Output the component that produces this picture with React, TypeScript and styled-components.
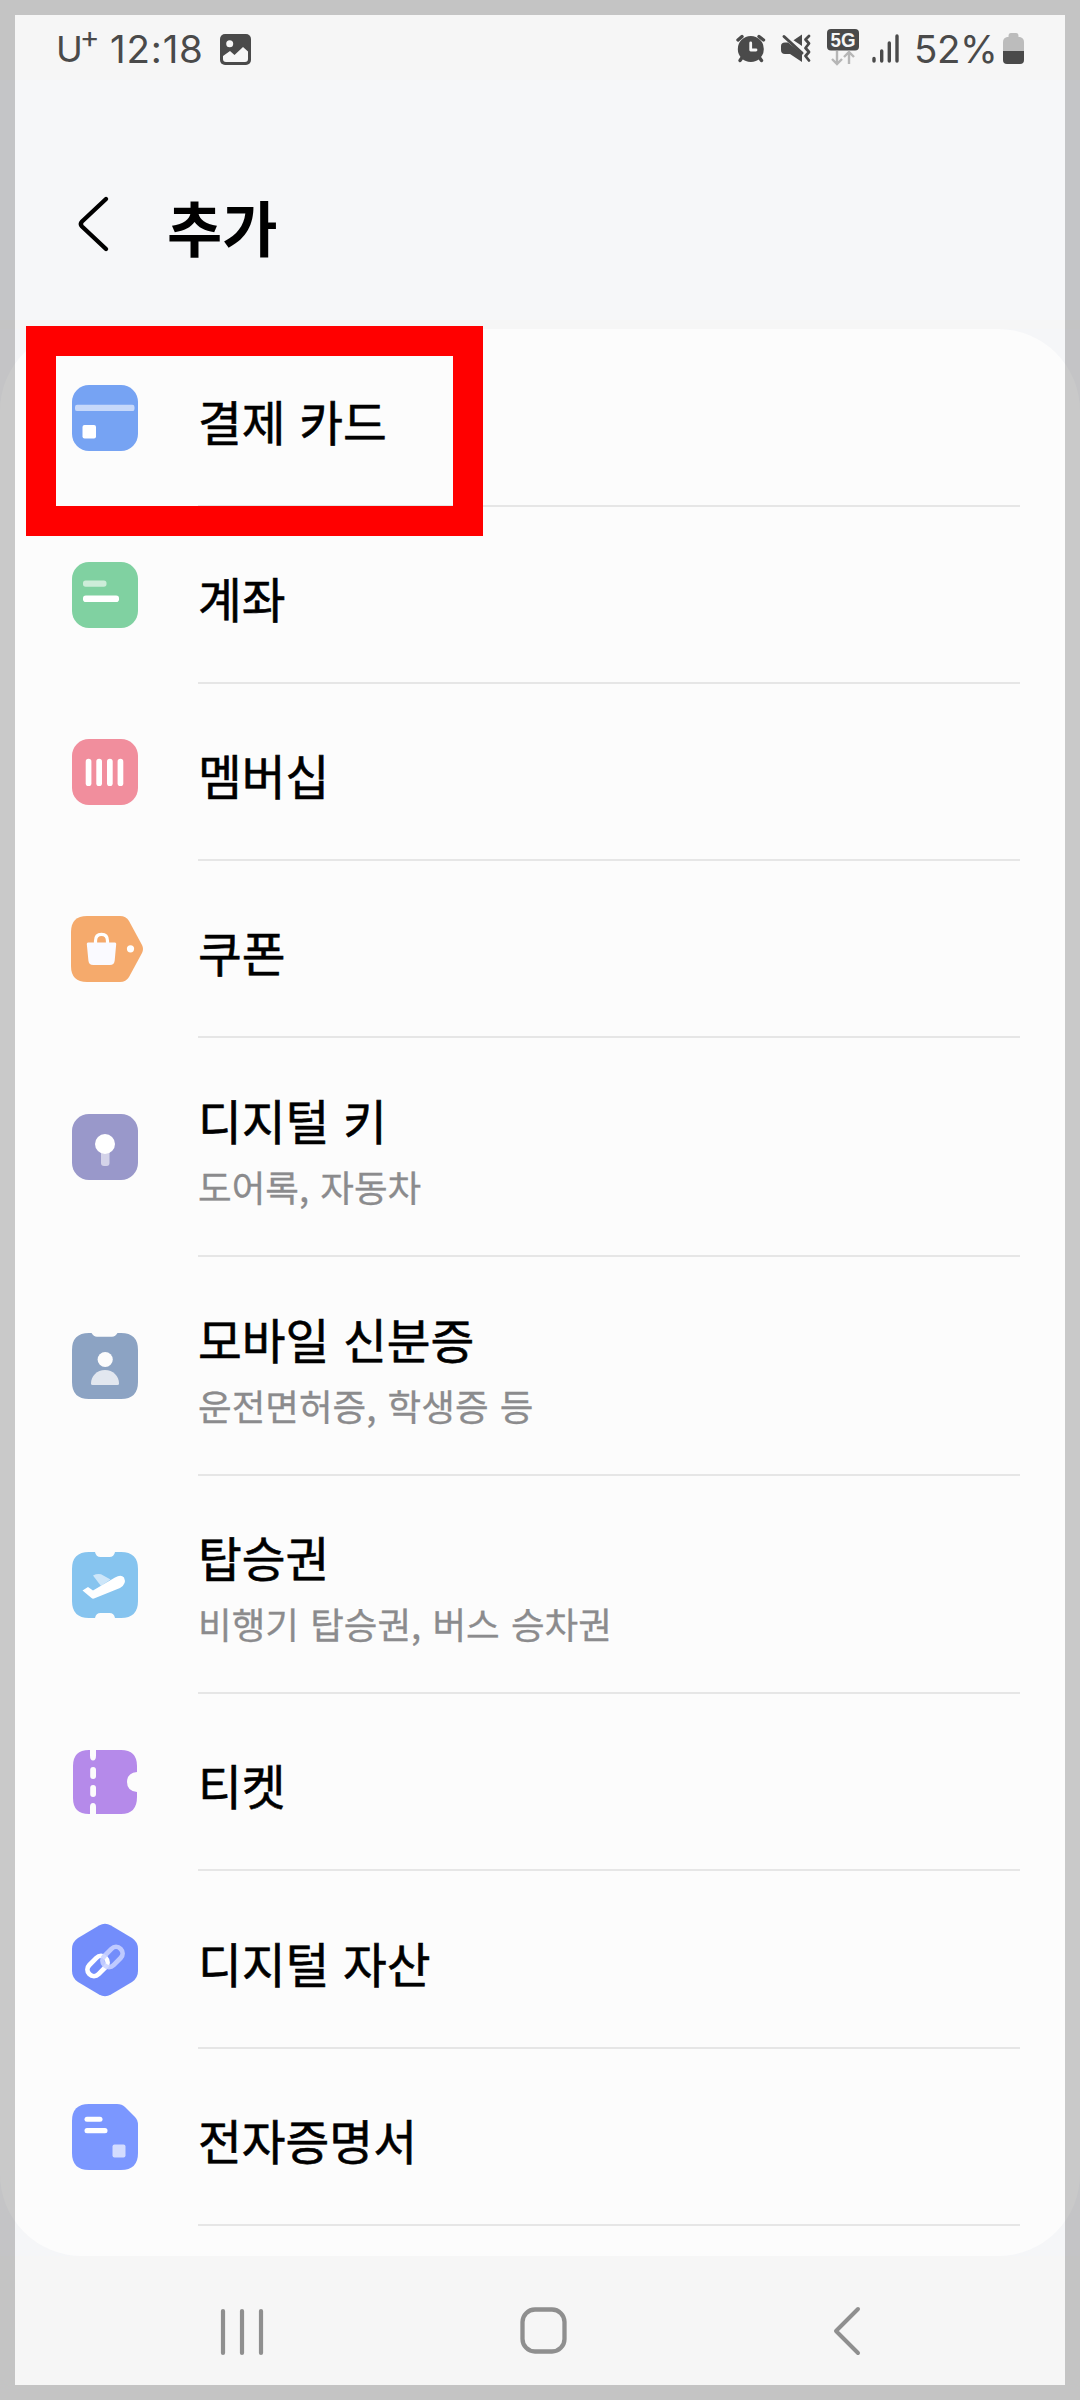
import React from "react";
import styled, { createGlobalStyle } from "styled-components";

const GlobalStyle = createGlobalStyle`
  * { box-sizing: border-box; }
  body { margin: 0; background: #c5c5c5; }
`;

const Phone = styled.div`
  position: relative;
  width: 1080px;
  height: 2400px;
  overflow: hidden;
  display: flex;
  flex-direction: column;
  background: #f5f6f8;
  color: #000;
  font-family: "Noto Sans CJK KR", sans-serif;
`;

const ScreenEdge = styled.div`
  position: absolute;
  inset: 0;
  border: 15px solid rgba(0, 0, 0, 0.2);
  pointer-events: none;
`;

const Highlight = styled.div`
  position: absolute;
  left: 26px;
  top: 326px;
  width: 457px;
  height: 210px;
  border: 30px solid #ff0000;
  pointer-events: none;
`;

const StatusBar = styled.div`
  flex: none;
  height: 80px;
  padding: 18px 56px 0 56px;
  display: flex;
  justify-content: space-between;
  background: #f6f6f6;
  color: #4a4a4a;
  font-family: Inter, sans-serif;
`;

const StatusGroup = styled.div`
  display: flex;
  align-items: center;
  height: 62px;
  svg { display: block; flex: none; }
`;

const Carrier = styled.span`
  width: 54px;
  font-size: 36px;
  line-height: 64px;
  display: flex;
  white-space: nowrap;
`;

const Plus = styled.span`
  font-size: 30px;
  line-height: 40px;
  margin-left: -3px;
`;

const Clock = styled.span`
  width: 110px;
  font-size: 38.5px;
  line-height: 62px;
  letter-spacing: 0.8px;
`;

const Percent = styled.span`
  width: 89px;
  margin-left: 13px;
  font-size: 38.5px;
  line-height: 62px;
  letter-spacing: -0.5px;
`;

const Header = styled.header`
  flex: none;
  height: 240px;
  padding: 94px 0 0 74px;
  display: flex;
  background: #f6f7f9;
  svg { display: block; margin-top: 18px; }
`;

const Title = styled.h1`
  margin: 0 0 0 55px;
  font-size: 60px;
  font-weight: 700;
  line-height: 104px;
`;

const Strip = styled.div`
  flex: none;
  height: 9px;
  background: #f6f6f6;
`;

const List = styled.ul`
  flex: none;
  list-style: none;
  margin: 0;
  padding: 0;
  height: 1927px;
  border-radius: 82px;
  background: #fcfcfc;
`;

const Row = styled.li<{ $height: number }>`
  height: ${(p) => p.$height}px;
  padding: 0 60px 0 66px;
  display: grid;
  grid-template-columns: 132px 1fr;
`;

const IconCell = styled.div<{ $top: number }>`
  padding-top: ${(p) => p.$top}px;
  svg { display: block; overflow: visible; }
`;

const TextCell = styled.div`
  display: flex;
  flex-direction: column;
  justify-content: center;
  padding-top: 7px;
  border-bottom: 2px solid #e6e6e6;
  white-space: nowrap;
`;

const Label = styled.span`
  font-size: 47.6px;
  font-weight: 400;
  -webkit-text-stroke: 0.6px #000;
  line-height: 66px;
  word-spacing: 3px;
`;

const Sub = styled.span`
  font-size: 36.6px;
  line-height: 54px;
  margin-top: 7px;
  color: #8b8b8d;
  -webkit-text-stroke: 0.3px #8b8b8d;
  word-spacing: 3px;
`;

const NavBar = styled.nav`
  flex: none;
  height: 144px;
  padding: 0 217px 0 218px;
  display: flex;
  align-items: center;
  justify-content: space-between;
  background: #f6f6f6;
  svg { display: block; margin-top: 6px; }
`;

const HomeButton = styled.svg`
  margin-right: 9px;
`;

const Glyph = ({ children }: { children: React.ReactNode }) => (
  <svg width="78" height="78" viewBox="0 0 78 78">{children}</svg>
);
const Tile = ({ fill }: { fill: string }) => (
  <rect x="6" y="6" width="66" height="66" rx="17" fill={fill} />
);

const CardIcon = () => (
  <Glyph>
    <Tile fill="#76a3f3" />
    <rect x="9" y="25.7" width="59.5" height="6.4" rx="2.2" fill="#c6d8fa" />
    <rect x="16.5" y="46" width="13.5" height="13.5" rx="2" fill="#fff" />
  </Glyph>
);
const AccountIcon = () => (
  <Glyph>
    <Tile fill="#80d1a1" />
    <rect x="17" y="24.5" width="23.5" height="6.2" rx="2.6" fill="#cdedd9" />
    <rect x="17" y="39.6" width="36" height="6.4" rx="2.8" fill="#fff" />
  </Glyph>
);
const MemberIcon = () => (
  <Glyph>
    <Tile fill="#f18e9d" />
    {[19.7, 30.3, 41, 51.6].map((x) => (
      <rect key={x} x={x} y="25.8" width="5.7" height="27.2" rx="2.85" fill="#fff" />
    ))}
  </Glyph>
);
const CouponIcon = () => (
  <Glyph>
    <path d="M21 6H54Q60 6 63 11L76 35Q78 39 76 43L63 67Q60 72 54 72H21Q5 72 5 56V22Q5 6 21 6Z" fill="#f5aa6c" />
    <path d="M29.5 34V31Q29.5 24.3 35.5 24.3Q41.5 24.3 41.5 31V34" fill="none" stroke="#fff" strokeWidth="3.2" />
    <path d="M22 32.5H49Q50.3 32.5 50.2 34L48.7 50.5Q48.3 55 43.8 55H27.3Q22.8 55 22.4 50.5L20.8 34Q20.7 32.5 22 32.5Z" fill="#fafaff" />
    <circle cx="64.5" cy="38.8" r="3.6" fill="#fff" />
  </Glyph>
);
const KeyIcon = () => (
  <Glyph>
    <Tile fill="#9998ca" />
    <rect x="35" y="40" width="8.5" height="18" rx="3" fill="#d4d3e9" />
    <circle cx="39" cy="36" r="10" fill="#fff" />
  </Glyph>
);
const IdIcon = () => (
  <Glyph>
    <path d="M23 6H25.5Q27.5 9.7 31 9.7H46Q49.5 9.7 51.5 6H55Q72 6 72 23V55Q72 72 55 72H23Q6 72 6 55V23Q6 6 23 6Z" fill="#8ca3c3" />
    <circle cx="39.2" cy="32.5" r="7.6" fill="#fcfcfc" />
    <path d="M26.5 58Q25 58 25 56.5C25 49 31 43 39 43S53 49 53 56.5Q53 58 51.5 58Z" fill="#e2e7ef" />
  </Glyph>
);
const BoardingIcon = () => (
  <Glyph>
    <path d="M23 6H29Q30 11 34.5 11H43.5Q48 11 49 6H55Q72 6 72 23V55Q72 72 55 72H49Q48 67 43.5 67H34.5Q30 67 29 72H23Q6 72 6 55V23Q6 6 23 6Z" fill="#86c4ef" />
    <path d="M27 29.5Q31 27.5 35 28.3L44.5 33.5L35 40Z" fill="#cde6f9" />
    <path d="M16.5 44.5L22 41L27 44.5L49 31.5Q55 28 58 31.5Q61 38 54 42L28 52.5Q26.5 53 25.5 52Z" fill="#fff" />
  </Glyph>
);
const TicketIcon = () => (
  <Glyph>
    <path d="M23 7H24V12.5Q24 17.5 27 17.5T30 12.5V7H55Q71 7 71 23V29Q61 30 61 39T71 49V54Q71 71 55 71H30V64Q30 60 27 60T24 64V71H23Q7 71 7 55V23Q7 7 23 7Z" fill="#b58aea" />
    <rect x="24.2" y="24" width="5.8" height="12" rx="2.9" fill="#fcfcfc" />
    <rect x="24.2" y="42" width="5.8" height="12" rx="2.9" fill="#fcfcfc" />
  </Glyph>
);
const AssetIcon = () => (
  <Glyph>
    <path d="M33 4.5Q39 1 45 4.5L66 17Q72 21 72 28V50Q72 57 66 61L45 73.5Q39 77 33 73.5L12 61Q6 57 6 50V28Q6 21 12 17Z" fill="#738dfb" />
    <g fill="none" strokeWidth="4.8">
      <rect x="-11.5" y="-6.5" width="23" height="13" rx="6.5" transform="translate(31.5 45) rotate(-45)" stroke="#fff" />
      <rect x="-11.5" y="-6.5" width="23" height="13" rx="6.5" transform="translate(46.5 36) rotate(-45)" stroke="#c9d3ff" strokeOpacity="0.88" />
    </g>
  </Glyph>
);
const CertIcon = () => (
  <Glyph>
    <path d="M23 6H51Q56 6 59 9L69 19Q72 22 72 27V55Q72 72 55 72H23Q6 72 6 55V23Q6 6 23 6Z" fill="#7b97ff" />
    <rect x="18.5" y="18.7" width="18" height="5" rx="2.5" fill="#fff" />
    <rect x="18.5" y="30" width="23" height="5.2" rx="2.5" fill="#fff" />
    <rect x="46.5" y="46.5" width="13" height="13" rx="2" fill="#d3dcff" />
  </Glyph>
);

const rows = [
  { label: "결제 카드", height: 178, Icon: CardIcon },
  { label: "계좌", height: 177, Icon: AccountIcon },
  { label: "멤버십", height: 177, Icon: MemberIcon },
  { label: "쿠폰", height: 177, Icon: CouponIcon },
  { label: "디지털 키", sub: "도어록, 자동차", height: 219, Icon: KeyIcon },
  { label: "모바일 신분증", sub: "운전면허증, 학생증 등", height: 219, Icon: IdIcon },
  { label: "탑승권", sub: "비행기 탑승권, 버스 승차권", height: 218, Icon: BoardingIcon },
  { label: "티켓", height: 177, Icon: TicketIcon },
  { label: "디지털 자산", height: 178, Icon: AssetIcon },
  { label: "전자증명서", height: 177, Icon: CertIcon },
];

const PictureIcon = () => (
  <svg width="31" height="31" viewBox="0 0 31 31">
    <rect width="31" height="31" rx="5" fill="#4a4a4a" />
    <circle cx="9.7" cy="9.7" r="3.5" fill="#f6f6f6" />
    <path d="M3 22L10 17L14.5 21L23 13L28 17.5V25Q28 28 25 28H6Q3 28 3 25Z" fill="#f6f6f6" />
  </svg>
);

const StatusIcons = () => (
  <svg width="165" height="40" viewBox="0 0 165 40">
    <g fill="none" stroke="#4a4a4a" strokeLinecap="round">
      <path d="M2 11L6 7.5M23 7.5L27.5 11" strokeWidth="3.4" />
      <path d="M6.5 28L4 31.5M23 28L25.5 31.5" strokeWidth="3.4" />
    </g>
    <circle cx="14.8" cy="20" r="13" fill="#4a4a4a" />
    <path d="M14.7 14V21H20" fill="none" stroke="#f6f6f6" strokeWidth="2.8" strokeLinecap="round" strokeLinejoin="round" />
    <path d="M66 5.5V17L57.5 11.2Z" fill="#4a4a4a" />
    <path d="M50.5 13.5H52L66 24.5V33L54 25H49Q45 25 45 21V17Q45 13.5 49 13.5Z" fill="#4a4a4a" />
    <path d="M48 7.5L66 24" stroke="#4a4a4a" strokeWidth="3" strokeLinecap="round" />
    <path d="M73 7L69.5 10.5L73 14.5L69.5 19L73 23L69.5 27L73 31.5" fill="none" stroke="#4a4a4a" strokeWidth="2.8" strokeLinecap="round" strokeLinejoin="round" />
    <rect x="91" y="0" width="32" height="21.5" rx="4" fill="#4a4a4a" />
    <text x="107" y="17.8" textAnchor="middle" textLength="25" lengthAdjust="spacingAndGlyphs" fontFamily="Liberation Sans, sans-serif" fontWeight="700" fontSize="20" fill="#f6f6f6">5G</text>
    <path d="M101 22V34.5M96 30L101 35L106 30M113 35V24M108 28L113 23L118 28" fill="none" stroke="#b6b6b6" strokeWidth="2.4" />
    <path d="M138 29.5V32M145.7 22V32M153.3 14V32M161 7V32" stroke="#4a4a4a" strokeWidth="3.4" strokeLinecap="round" />
  </svg>
);

const BatteryIcon = () => (
  <svg width="21" height="32" viewBox="0 0 21 32">
    <path d="M5.5 3Q5.5 0 8 0H13Q15.5 0 15.5 3V4H17Q21 5 21 9V19H0V9Q0 5 4 4H5.5Z" fill="#bcbcbc" />
    <path d="M0 18H21V27Q21 31 17 31H4Q0 31 0 27Z" fill="#4a4a4a" />
  </svg>
);

export default function App() {
  return (
    <Phone>
      <GlobalStyle />
      <StatusBar>
        <StatusGroup>
          <Carrier>U<Plus>+</Plus></Carrier>
          <Clock>12:18</Clock>
          <PictureIcon />
        </StatusGroup>
        <StatusGroup>
          <StatusIcons />
          <Percent>52%</Percent>
          <BatteryIcon />
        </StatusGroup>
      </StatusBar>
      <Header>
        <svg width="38" height="64" viewBox="0 0 38 64">
          <path d="M32 7L8 29.5Q5.5 32 8 34.5L32 57" fill="none" stroke="#000" strokeWidth="4.4" strokeLinecap="round" strokeLinejoin="round" />
        </svg>
        <Title>추가</Title>
      </Header>
      <Strip />
      <List>
        {rows.map(({ label, sub, height, Icon }) => (
          <Row key={label} $height={height}>
            <IconCell $top={Math.floor((height - 78) / 2)}><Icon /></IconCell>
            <TextCell>
              <Label>{label}</Label>
              {sub && <Sub>{sub}</Sub>}
            </TextCell>
          </Row>
        ))}
      </List>
      <NavBar>
        <svg width="48" height="52" viewBox="0 0 48 52">
          <path d="M5 6V48M24 6V48M43 6V48" stroke="#8f8f8f" strokeWidth="4.2" strokeLinecap="round" />
        </svg>
        <HomeButton width="52" height="52" viewBox="0 0 52 52">
          <rect x="4.5" y="4.5" width="42" height="42" rx="12.5" fill="none" stroke="#8f8f8f" strokeWidth="4.3" />
        </HomeButton>
        <svg width="32" height="54" viewBox="0 0 32 54">
          <path d="M27 5L5 27L27 49" fill="none" stroke="#8f8f8f" strokeWidth="4" strokeLinecap="round" strokeLinejoin="round" />
        </svg>
      </NavBar>
      <ScreenEdge />
      <Highlight />
    </Phone>
  );
}
